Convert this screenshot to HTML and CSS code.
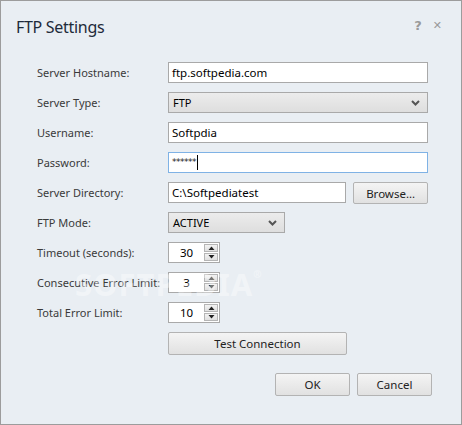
FILE: index.html
```html
<!DOCTYPE html>
<html>
<head>
<meta charset="utf-8">
<link rel="stylesheet" href="styles.css">
</head>
<body>
<div class="window">
  <div class="titlebar">
    <div class="title">FTP Settings</div>
    <div class="controls"><span class="ctl">?</span><span class="ctl close">✕</span></div>
  </div>
  <div class="form">
    <div class="label">Server Hostname:</div>
    <div class="field"><div class="input wide">ftp.softpedia.com</div></div>

    <div class="label">Server Type:</div>
    <div class="field"><div class="select wide"><span>FTP</span><svg class="chev" width="9" height="6" viewBox="0 0 9 6"><path d="M1 1 L4.5 4.5 L8 1" fill="none" stroke="#555" stroke-width="2"/></svg></div></div>

    <div class="label">Username:</div>
    <div class="field"><div class="input wide">Softpdia</div></div>

    <div class="label">Password:</div>
    <div class="field"><div class="input wide focus"><span class="pw">******</span><span class="caret"></span></div></div>

    <div class="label">Server Directory:</div>
    <div class="field dirrow"><div class="input dir">C:\Softpediatest</div><div class="btn browse">Browse...</div></div>

    <div class="label">FTP Mode:</div>
    <div class="field"><div class="select mode"><span>ACTIVE</span><svg class="chev" width="9" height="6" viewBox="0 0 9 6"><path d="M1 1 L4.5 4.5 L8 1" fill="none" stroke="#555" stroke-width="2"/></svg></div></div>

    <div class="label">Timeout (seconds):</div>
    <div class="field"><div class="spin"><span class="val">30</span><div class="arrows"><div class="up"><svg width="7" height="4" viewBox="0 0 7 4"><path d="M0.5 4 L3.5 0.5 L6.5 4Z" fill="#222"/></svg></div><div class="down"><svg width="7" height="4" viewBox="0 0 7 4"><path d="M0.5 0 L3.5 3.5 L6.5 0Z" fill="#222"/></svg></div></div></div></div>

    <div class="label">Consecutive Error Limit:</div>
    <div class="field"><div class="spin"><span class="val">3</span><div class="arrows"><div class="up"><svg width="7" height="4" viewBox="0 0 7 4"><path d="M0.5 4 L3.5 0.5 L6.5 4Z" fill="#222"/></svg></div><div class="down"><svg width="7" height="4" viewBox="0 0 7 4"><path d="M0.5 0 L3.5 3.5 L6.5 0Z" fill="#222"/></svg></div></div></div></div>

    <div class="label">Total Error Limit:</div>
    <div class="field"><div class="spin"><span class="val">10</span><div class="arrows"><div class="up"><svg width="7" height="4" viewBox="0 0 7 4"><path d="M0.5 4 L3.5 0.5 L6.5 4Z" fill="#222"/></svg></div><div class="down"><svg width="7" height="4" viewBox="0 0 7 4"><path d="M0.5 0 L3.5 3.5 L6.5 0Z" fill="#222"/></svg></div></div></div></div>

    <div class="label"></div>
    <div class="field"><div class="btn test">Test Connection</div></div>
  </div>
  <div class="footer">
    <div class="btn dlg">OK</div>
    <div class="btn dlg">Cancel</div>
  </div>
  <div class="watermark">SOFTPEDIA<sup>®</sup></div>
</div>
</body>
</html>
```
FILE: styles.css
```css
body {
  margin: 0;
  font-family: "Noto Sans", "Open Sans", sans-serif;
}
.window {
  position: relative;
  width: 462px;
  height: 425px;
  box-sizing: border-box;
  border: 1px solid #9c9c9c;
  background: #e9eef3;
  overflow: hidden;
}
.titlebar {
  display: flex;
  justify-content: space-between;
  align-items: center;
  height: 48px;
  padding: 0 19px 0 15px;
}
.title {
  font-size: 16px;
  letter-spacing: -0.3px;
  color: #1e2a3a;
  margin-top: 4px;
}
.controls {
  display: flex;
  gap: 11px;
  color: #9a9a9a;
  font-size: 13px;
  font-weight: bold;
  font-family: "DejaVu Sans", sans-serif;
}
.close {
  font-size: 11px;
  margin-top: 1px;
}
.form {
  display: grid;
  grid-template-columns: 131px 260px;
  grid-auto-rows: 30px;
  padding-left: 36px;
  margin-top: 13px;
  font-size: 11px;
}
.label {
  line-height: 21px;
  color: #3a3a3a;
  white-space: nowrap;
}
.field {
  display: flex;
}
.dirrow {
  gap: 7px;
}
.input {
  box-sizing: border-box;
  height: 21px;
  border: 1px solid #a9a9a9;
  background: #fff;
  padding: 0 3px;
  line-height: 19px;
  color: #000;
  display: flex;
  align-items: center;
  font-size: 11.5px;
}
.wide {
  width: 260px;
}
.focus {
  border-color: #7fb2e5;
}
.pw {
  font-size: 9px;
  letter-spacing: -0.5px;
  color: #222;
  font-family: "DejaVu Sans", sans-serif;
}
.caret {
  width: 1px;
  height: 15px;
  background: #000;
  margin-left: 1px;
}
.dir {
  width: 179px;
}
.select {
  box-sizing: border-box;
  height: 21px;
  border: 1px solid #a9a9a9;
  background: linear-gradient(#ececec, #dedede);
  padding: 0 7px 0 4px;
  display: flex;
  align-items: center;
  justify-content: space-between;
  color: #000;
  font-size: 11px;
}
.mode {
  width: 117px;
}
.chev {
  display: block;
}
.btn {
  box-sizing: border-box;
  border: 1px solid #b3b3b3;
  border-radius: 2px;
  background: linear-gradient(#f4f4f4, #e1e1e1);
  display: flex;
  align-items: center;
  justify-content: center;
  color: #222;
  font-size: 11.5px;
}
.browse {
  width: 75px;
  height: 22px;
}
.test {
  width: 179px;
  height: 23px;
}
.spin {
  box-sizing: border-box;
  width: 52px;
  height: 21px;
  border: 1px solid #a9a9a9;
  background: #fff;
  display: flex;
  align-items: center;
  padding-right: 1px;
  font-size: 11.5px;
}
.val {
  flex: 1;
  text-align: center;
  color: #000;
}
.arrows {
  width: 14px;
  height: 17px;
  display: flex;
  flex-direction: column;
  gap: 1px;
}
.up, .down {
  flex: 1;
  box-sizing: border-box;
  border: 1px solid #b5b5b5;
  background: linear-gradient(#f2f2f2, #e0e0e0);
  display: flex;
  align-items: center;
  justify-content: center;
}
.up svg, .down svg {
  display: block;
}
.footer {
  display: flex;
  justify-content: flex-end;
  gap: 7px;
  padding-right: 29px;
  margin-top: 11px;
}
.dlg {
  width: 75px;
  height: 23px;
}
.watermark {
  position: absolute;
  left: 74px;
  top: 262px;
  font-size: 31px;
  font-weight: bold;
  letter-spacing: 1px;
  color: rgba(255, 255, 255, 0.4);
  pointer-events: none;
}
.watermark sup {
  font-size: 10px;
  vertical-align: top;
  position: relative;
  top: 4px;
}
```
